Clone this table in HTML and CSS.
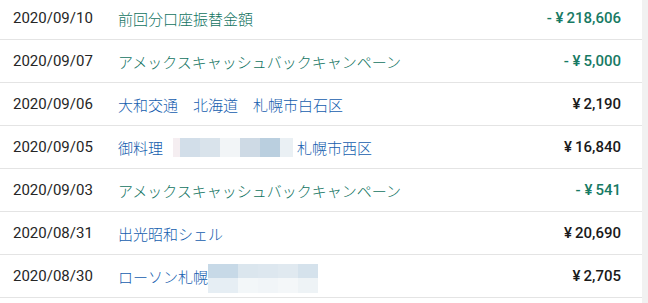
FILE: index.html
```html
<!DOCTYPE html>
<html lang="ja">
<head>
<meta charset="utf-8">
<link rel="stylesheet" href="styles.css">
</head>
<body>
<div class="page">
  <div class="list">
    <div class="row"><span class="date">2020/09/10</span><span class="desc green">前回分口座振替金額</span><span class="amt green">- ¥&#8201;218,606</span></div>
    <div class="row"><span class="date">2020/09/07</span><span class="desc green">アメックスキャッシュバックキャンペーン</span><span class="amt green">- ¥&#8201;5,000</span></div>
    <div class="row"><span class="date">2020/09/06</span><span class="desc blue">大和交通　北海道　札幌市白石区</span><span class="amt">¥&#8201;2,190</span></div>
    <div class="row"><span class="date">2020/09/05</span><span class="desc blue">御料理<span class="mosaic m1"><i class="c0"></i><i class="c1"></i><i class="c2"></i><i class="c3"></i><i class="c4"></i><i class="c5"></i><i class="c6"></i></span>札幌市西区</span><span class="amt">¥&#8201;16,840</span></div>
    <div class="row"><span class="date">2020/09/03</span><span class="desc green">アメックスキャッシュバックキャンペーン</span><span class="amt green">- ¥&#8201;541</span></div>
    <div class="row"><span class="date">2020/08/31</span><span class="desc blue">出光昭和シェル</span><span class="amt">¥&#8201;20,690</span></div>
    <div class="row"><span class="date">2020/08/30</span><span class="desc blue">ローソン札幌<span class="mosaic m2"><span class="mrow"><i class="d0"></i><i class="d1"></i><i class="d2"></i><i class="d3"></i><i class="d4"></i></span><span class="mrow"><i class="e0"></i><i class="e1"></i><i class="e2"></i><i class="e3"></i><i class="e4"></i></span></span></span><span class="amt">¥&#8201;2,705</span></div>
    <div class="row"></div>
  </div>
  <div class="scroll"></div>
</div>
</body>
</html>
```
FILE: styles.css
```css
html, body { margin: 0; padding: 0; background: #fff; overflow: hidden; }
.page { display: flex; width: 648px; height: 303px; overflow: hidden; }
.list { width: 642px; margin-top: -3px; }
.scroll { width: 6px; background: #f1f1f1; }
.row {
  display: flex; align-items: center; height: 42px;
  border-bottom: 1px solid #e4e4e4;
  font-family: Roboto, "Noto Sans CJK JP", sans-serif;
  font-size: 15px;
}
.date { width: 105px; padding-left: 13px; color: #262626; flex: none; }
.desc { flex: 1; display: flex; align-items: center; font-family: "Noto Sans CJK JP", sans-serif; font-weight: 300; white-space: nowrap; }
.green { color: #11735f; }
.blue { color: #145dae; }
.amt { padding-right: 21px; font-weight: 500; color: #1a1a1a; white-space: pre; }
.amt.green { color: #177a64; }
.mosaic { display: inline-flex; }
.mosaic i { display: block; width: 20px; }
.m1 { height: 19px; margin: 0 4px 0 10px; }
.m1 .c0 { width: 7px; background: #f5eef1; }
.m1 .c1 { background: #d2dee9; }
.m1 .c2 { background: #d9e3eb; }
.m1 .c3 { background: #f2f5f7; }
.m1 .c4 { background: #cedae5; }
.m1 .c5 { background: #bacfdf; }
.m1 .c6 { width: 13px; background: #eaf0f4; }
.m2 { flex-direction: column; height: 29px; margin-top: 4px; }
.mrow { display: flex; height: 50%; }
.m2 .d0 { width: 30px; background: #c7d9e7; }
.m2 .d1 { background: #dbe6ee; }
.m2 .d2 { background: #dde7ef; }
.m2 .d3 { background: #e0e9f0; }
.m2 .d4 { background: #d5e2ec; }
.m2 .e0 { width: 30px; background: #e6eef4; }
.m2 .e1 { background: #f3f7f9; }
.m2 .e2 { background: #f1f5f8; }
.m2 .e3 { background: #f4f7f9; }
.m2 .e4 { background: #eef3f6; }
```
